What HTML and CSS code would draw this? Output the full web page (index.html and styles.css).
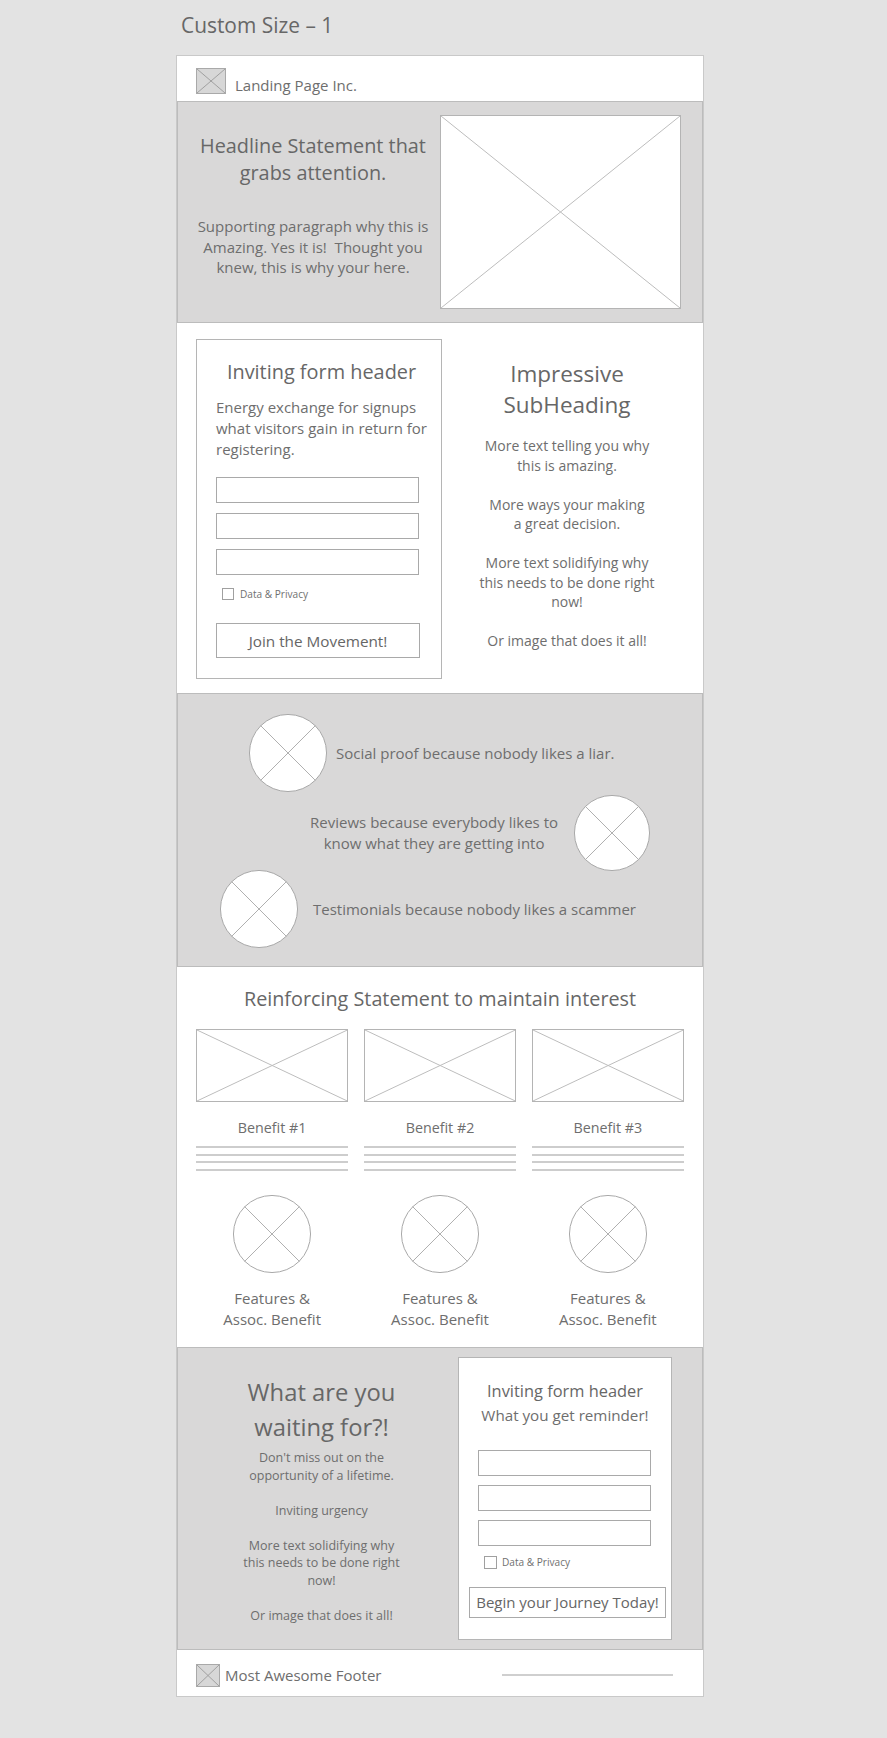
FILE: index.html
```html
<!DOCTYPE html>
<html lang="en">
<head>
    <meta charset="UTF-8">
    <meta name="viewport" content="width=device-width, initial-scale=1.0">
    <title>Custom Size – 1</title>
    <link rel="stylesheet" href="styles.css">
</head>
<body>
    <div class="canvas">
        <h1 class="board-name">Custom Size – 1</h1>

        <div class="board">
            <header class="topbar">
                <div class="logo">
                    <svg class="cross" viewBox="0 0 100 100" preserveAspectRatio="none"><path d="M0 0L100 100M100 0L0 100"/></svg>
                </div>
                <span class="brand">Landing Page Inc.</span>
            </header>

            <section class="hero gray">
                <div class="hero-text">
                    <h2>Headline Statement that<br>grabs attention.</h2>
                    <p>Supporting paragraph why this is<br>Amazing. Yes it is!&nbsp; Thought you<br>knew, this is why your here.</p>
                </div>
                <div class="picture hero-pic">
                    <svg class="cross" viewBox="0 0 100 100" preserveAspectRatio="none"><path d="M0 0L100 100M100 0L0 100"/></svg>
                </div>
            </section>

            <section class="signup">
                <form class="form-card">
                    <h3>Inviting form header</h3>
                    <p>Energy exchange for signups<br>what visitors gain in return for<br>registering.</p>
                    <div class="fields">
                        <input type="text">
                        <input type="text">
                        <input type="text">
                    </div>
                    <label class="check"><span class="box"></span>Data &amp; Privacy</label>
                    <button type="button" class="join">Join the Movement!</button>
                </form>
                <div class="pitch">
                    <h2>Impressive<br>SubHeading</h2>
                    <p>More text telling you why<br>this is amazing.</p>
                    <p>More ways your making<br>a great decision.</p>
                    <p>More text solidifying why<br>this needs to be done right<br>now!</p>
                    <p>Or image that does it all!</p>
                </div>
            </section>

            <section class="proof gray">
                <div class="proof-row first">
                    <svg class="avatar" viewBox="0 0 100 100" preserveAspectRatio="none"><ellipse cx="50" cy="50" rx="49.4" ry="49.4"/><path d="M14.6 14.6L85.4 85.4M85.4 14.6L14.6 85.4"/></svg>
                    <p>Social proof because nobody likes a liar.</p>
                </div>
                <div class="proof-row second">
                    <p>Reviews because everybody likes to<br>know what they are getting into</p>
                    <svg class="avatar" viewBox="0 0 100 100" preserveAspectRatio="none"><ellipse cx="50" cy="50" rx="49.4" ry="49.4"/><path d="M14.6 14.6L85.4 85.4M85.4 14.6L14.6 85.4"/></svg>
                </div>
                <div class="proof-row third">
                    <svg class="avatar" viewBox="0 0 100 100" preserveAspectRatio="none"><ellipse cx="50" cy="50" rx="49.4" ry="49.4"/><path d="M14.6 14.6L85.4 85.4M85.4 14.6L14.6 85.4"/></svg>
                    <p>Testimonials because nobody likes a scammer</p>
                </div>
            </section>

            <section class="benefits">
                <h2>Reinforcing Statement to maintain interest</h2>
                <div class="benefit-grid">
                    <div class="benefit">
                        <div class="picture"><svg class="cross" viewBox="0 0 100 100" preserveAspectRatio="none"><path d="M0 0L100 100M100 0L0 100"/></svg></div>
                        <h4>Benefit #1</h4>
                        <div class="lines"><i></i><i></i><i></i><i></i></div>
                    </div>
                    <div class="benefit">
                        <div class="picture"><svg class="cross" viewBox="0 0 100 100" preserveAspectRatio="none"><path d="M0 0L100 100M100 0L0 100"/></svg></div>
                        <h4>Benefit #2</h4>
                        <div class="lines"><i></i><i></i><i></i><i></i></div>
                    </div>
                    <div class="benefit">
                        <div class="picture"><svg class="cross" viewBox="0 0 100 100" preserveAspectRatio="none"><path d="M0 0L100 100M100 0L0 100"/></svg></div>
                        <h4>Benefit #3</h4>
                        <div class="lines"><i></i><i></i><i></i><i></i></div>
                    </div>
                </div>
                <div class="feature-grid">
                    <div class="feature">
                        <svg class="avatar" viewBox="0 0 100 100" preserveAspectRatio="none"><ellipse cx="50" cy="50" rx="49.4" ry="49.4"/><path d="M14.6 14.6L85.4 85.4M85.4 14.6L14.6 85.4"/></svg>
                        <p>Features &amp;<br>Assoc. Benefit</p>
                    </div>
                    <div class="feature">
                        <svg class="avatar" viewBox="0 0 100 100" preserveAspectRatio="none"><ellipse cx="50" cy="50" rx="49.4" ry="49.4"/><path d="M14.6 14.6L85.4 85.4M85.4 14.6L14.6 85.4"/></svg>
                        <p>Features &amp;<br>Assoc. Benefit</p>
                    </div>
                    <div class="feature">
                        <svg class="avatar" viewBox="0 0 100 100" preserveAspectRatio="none"><ellipse cx="50" cy="50" rx="49.4" ry="49.4"/><path d="M14.6 14.6L85.4 85.4M85.4 14.6L14.6 85.4"/></svg>
                        <p>Features &amp;<br>Assoc. Benefit</p>
                    </div>
                </div>
            </section>

            <section class="closing gray">
                <div class="urgency">
                    <h2>What are you<br>waiting for?!</h2>
                    <p>Don't miss out on the<br>opportunity of a lifetime.</p>
                    <p>Inviting urgency</p>
                    <p>More text solidifying why<br>this needs to be done right<br>now!</p>
                    <p>Or image that does it all!</p>
                </div>
                <form class="form-card small">
                    <h3>Inviting form header</h3>
                    <p>What you get reminder!</p>
                    <div class="fields">
                        <input type="text">
                        <input type="text">
                        <input type="text">
                    </div>
                    <label class="check"><span class="box"></span>Data &amp; Privacy</label>
                    <button type="button" class="join">Begin your Journey Today!</button>
                </form>
            </section>

            <footer class="bottombar">
                <div class="logo">
                    <svg class="cross" viewBox="0 0 100 100" preserveAspectRatio="none"><path d="M0 0L100 100M100 0L0 100"/></svg>
                </div>
                <span class="brand">Most Awesome Footer</span>
                <div class="rule"></div>
            </footer>
        </div>
    </div>
</body>
</html>
```

FILE: styles.css
```css
* {
    box-sizing: border-box;
}

body {
    margin: 0;
    background-color: #e3e3e3;
    font-family: "Open Sans", "Noto Sans", sans-serif;
    color: #6e6e6e;
}

h1, h2, h3, h4, p {
    margin: 0;
    font-weight: 400;
    white-space: nowrap;
}

.canvas {
    width: 528px;
    margin-left: 176px;
    padding: 13px 0 40px;
}

.board-name {
    padding-left: 5px;
    font-size: 20.9px;
    line-height: 24px;
    color: #676767;
    margin-bottom: 18px;
}

.board {
    background: #fff;
    border: 1px solid #c9c9c9;
}

.gray {
    background-color: #d9d8d8;
    border: 1px solid #bcbcbc;
}

/* placeholders */
.cross {
    display: block;
    width: 100%;
    height: 100%;
}

.cross path {
    stroke: #bdbdbd;
    stroke-width: 1;
    fill: none;
    vector-effect: non-scaling-stroke;
}

.picture {
    background: #fff;
    border: 1px solid #b4b4b4;
}

.avatar {
    display: block;
    width: 78px;
    height: 78px;
    flex-shrink: 0;
}

.avatar ellipse {
    fill: #fff;
    stroke: #a9a9a9;
    stroke-width: 1;
    vector-effect: non-scaling-stroke;
}

.avatar path {
    stroke: #b0b0b0;
    stroke-width: 1;
    fill: none;
    vector-effect: non-scaling-stroke;
}

.logo {
    background: #d7d7d7;
    border: 1px solid #a9a9a9;
    flex-shrink: 0;
}

.logo .cross path {
    stroke: #a0a0a0;
}

/* header */
.topbar {
    height: 45px;
    display: flex;
    align-items: center;
    padding: 4px 19px 0;
}

.topbar .logo {
    width: 30px;
    height: 26px;
}

.topbar .brand {
    margin: 8px 0 0 9px;
    font-size: 15px;
}

/* hero */
.hero {
    height: 222px;
    display: flex;
    align-items: flex-start;
}

.hero-text {
    flex: 1;
    padding: 30px 0 0 8px;
    text-align: center;
}

.hero-text h2 {
    font-size: 19.85px;
    line-height: 27px;
    color: #676767;
}

.hero-text p {
    margin-top: 30px;
    font-size: 15px;
    line-height: 20.5px;
}

.hero-pic {
    width: 241px;
    height: 194px;
    margin: 13px 21px 0 0;
}

/* signup */
.signup {
    height: 370px;
    display: flex;
    align-items: flex-start;
    padding: 16px 0 0 19px;
}

.form-card {
    width: 246px;
    height: 340px;
    border: 1px solid #b5b5b5;
    background: #fff;
    padding: 18px 14px 0 19px;
    margin: 0;
}

.form-card h3 {
    font-size: 19.9px;
    line-height: 27px;
    text-align: center;
    color: #676767;
}

.form-card p {
    margin-top: 12px;
    font-size: 15px;
    line-height: 21px;
}

.fields {
    display: flex;
    flex-direction: column;
    gap: 10px;
    margin-top: 17px;
}

.fields input {
    display: block;
    width: 203px;
    height: 26px;
    margin: 0;
    border: 1px solid #a9a9a9;
    border-radius: 0;
    background: #fff;
}

.check {
    display: flex;
    align-items: center;
    gap: 6px;
    margin: 13px 0 0 6px;
    height: 12px;
    font-size: 10.1px;
    color: #707070;
}

.check .box {
    width: 12px;
    height: 12px;
    border: 1px solid #a0a0a0;
    background: #fff;
}

.join {
    display: block;
    width: 204px;
    height: 35px;
    margin-top: 23px;
    padding: 0;
    border: 1px solid #a9a9a9;
    border-radius: 0;
    background: #fff;
    font-family: inherit;
    font-size: 15.3px;
    color: #666;
}

.pitch {
    flex: 1;
    padding: 0 11px 0 0;
    margin-top: 19px;
    text-align: center;
}

.pitch h2 {
    font-size: 22.5px;
    line-height: 31px;
    color: #676767;
}

.pitch p {
    font-size: 14px;
    line-height: 19.5px;
    margin-top: 19.5px;
}

.pitch h2 + p {
    margin-top: 16px;
}

/* social proof */
.proof {
    height: 274px;
    padding-top: 20px;
}

.proof-row {
    display: flex;
    align-items: center;
    height: 78px;
    font-size: 15px;
}

.proof-row.first {
    padding-left: 71px;
    gap: 9px;
}

.proof-row.second {
    justify-content: flex-end;
    height: 76px;
    padding-right: 52px;
    gap: 16px;
    margin-top: 3px;
    text-align: center;
    line-height: 21px;
}

.proof-row.second .avatar {
    width: 76px;
    height: 76px;
}

.proof-row.third {
    padding-left: 42px;
    gap: 15px;
    margin-top: -1px;
}

/* benefits */
.benefits {
    height: 380px;
    padding: 18px 19px 0;
}

.benefits h2 {
    font-size: 19.8px;
    line-height: 27px;
    text-align: center;
    color: #676767;
}

.benefit-grid,
.feature-grid {
    display: grid;
    grid-template-columns: repeat(3, 1fr);
    column-gap: 15.5px;
}

.benefit-grid {
    margin-top: 17px;
}

.benefit .picture {
    height: 73px;
}

.benefit h4 {
    margin-top: 15.5px;
    font-size: 14.3px;
    font-weight: 400;
    line-height: 20px;
    text-align: center;
}

.lines {
    display: flex;
    flex-direction: column;
    gap: 5.7px;
    margin-top: 8.5px;
}

.lines i {
    display: block;
    height: 2px;
    background: #cdcdcd;
}

.feature-grid {
    margin-top: 24px;
}

.feature {
    display: flex;
    flex-direction: column;
    align-items: center;
}

.feature p {
    margin-top: 14.7px;
    font-size: 15px;
    line-height: 21px;
    text-align: center;
}

/* closing */
.closing {
    height: 303px;
    display: flex;
    align-items: flex-start;
    padding: 9px 30px 0 0;
}

.urgency {
    flex: 1;
    padding: 18.3px 0 0 7px;
    text-align: center;
}

.urgency h2 {
    font-size: 23.8px;
    line-height: 35px;
    color: #676767;
}

.urgency p {
    font-size: 12.5px;
    line-height: 17.5px;
    margin-top: 17.5px;
}

.urgency h2 + p {
    margin-top: 4px;
}

.form-card.small {
    width: 214px;
    height: 283px;
    padding: 20.6px 19px 0;
}

.form-card.small h3 {
    font-size: 16.4px;
    line-height: 24px;
}

.form-card.small p {
    margin-top: 0;
    font-size: 15.2px;
    line-height: 24px;
    text-align: center;
}

.form-card.small .fields {
    margin-top: 23px;
    gap: 9px;
}

.form-card.small .fields input {
    width: 173px;
}

.form-card.small .check {
    margin-top: 10px;
    height: 13px;
    gap: 5px;
}

.form-card.small .check .box {
    width: 13px;
    height: 13px;
}

.form-card.small .join {
    width: 197px;
    height: 31px;
    margin: 18px 0 0 -9px;
    font-size: 15px;
}

/* footer */
.bottombar {
    height: 46px;
    display: flex;
    align-items: center;
    padding: 4px 30px 0 19px;
}

.bottombar .logo {
    width: 24px;
    height: 23px;
}

.bottombar .brand {
    margin-left: 5px;
    font-size: 15px;
}

.bottombar .rule {
    margin-left: auto;
    width: 171px;
    height: 2px;
    background: #cfcfcf;
}
```
